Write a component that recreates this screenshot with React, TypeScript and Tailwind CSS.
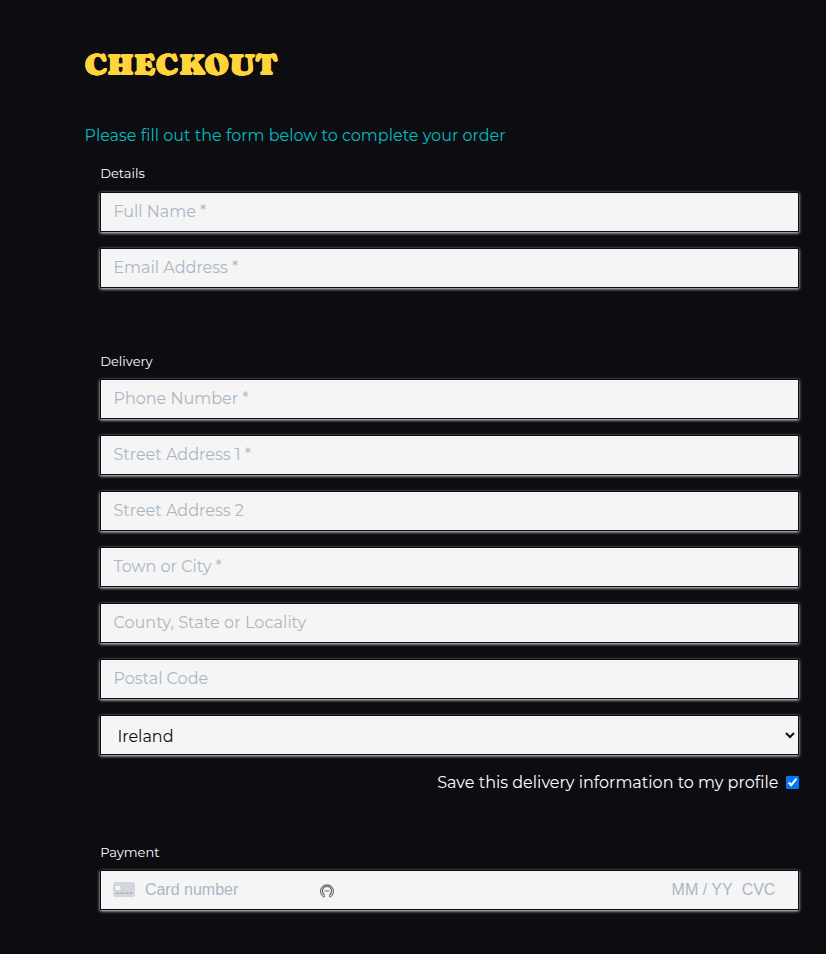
const field =
  "block h-10 w-full rounded-none border border-[#0d0c11] bg-[#f5f5f5] px-3 pb-0.5 text-base text-[#0d0c11] outline-none placeholder:text-[#aab7c4] placeholder:opacity-100 shadow-[0_1px_3px_0_#e6ebf1]";

function Field({ label, spacing = "" }: { label: string; spacing?: string }) {
  return <input type="text" placeholder={label} className={`${field} ${spacing}`} />;
}

function CardIcon() {
  return (
    <svg width="22" height="15" viewBox="0 0 22 15" className="mb-px block shrink-0">
      <rect width="22" height="15" rx="2" fill="#d3d6dd" />
      <rect x="2.5" y="4" width="5" height="4" rx="1" fill="#f5f5f5" />
      <path d="M2.5 11.3h3.7M7.3 11.3h3.5M11.8 11.3h3.5M16.2 11.3h3.3" stroke="#aeb2bf" strokeWidth="1.5" />
    </svg>
  );
}

function AutofillIcon() {
  return (
    <svg width="16" height="16" viewBox="0 0 16 16" fill="none" stroke="#666" className="mt-0.5 block shrink-0">
      <path d="M3.6 13.2A6.5 6.5 0 1 1 12.4 13.2" strokeWidth="1.1" />
      <path d="M5.2 11.6A4.6 4.6 0 1 1 10.8 11.6" strokeWidth="1.2" />
      <path d="M5.4 11.4v2.8M10.6 11.4v2.8M3.6 13.2l1.4 1M12.4 13.2l-1.4 1M5.5 8h5" strokeWidth="1" />
    </svg>
  );
}

export default function App() {
  return (
    <main className="h-[954px] w-full overflow-hidden bg-[#0d0c11] pl-[84.4px] pr-[26.6px] pt-[42px] font-[Montserrat,sans-serif] text-white">
      <h1 className="h-11 whitespace-nowrap pt-px font-['Cooper_Black','Caprasimo','Corben','Bevan','Alfa_Slab_One','DejaVu_Serif',serif] text-[30px] font-normal leading-[43px] text-[#ffd43a]">
        <span className="inline-block origin-left scale-x-[1.065] [text-shadow:0.5px_0_#ffd43a,1px_0_#ffd43a]">CHECKOUT</span>
      </h1>
      <p className="mt-[38px] h-6 whitespace-nowrap text-base leading-6 text-[#00bcc2]">
        Please fill out the form below to complete your order
      </p>
      <form className="ml-4">
        <section>
          <h2 className="-ml-[0.2px] mt-[15px] h-5 text-[13px] leading-5">Details</h2>
          <div className="mt-[9px] flex flex-col gap-4">
            <Field label="Full Name *" />
            <Field label="Email Address *" />
          </div>
        </section>
        <section>
          <h2 className="-ml-[0.2px] mt-[63px] h-5 text-[13px] leading-5">Delivery</h2>
          <div className="mt-2 flex flex-col gap-4">
            <Field label="Phone Number *" />
            <Field label="Street Address 1 *" />
            <Field label="Street Address 2" />
            <Field label="Town or City *" />
            <Field label="County, State or Locality" spacing="tracking-[0.07px]" />
            <Field label="Postal Code" />
            <select className="block h-10 w-full rounded-none border border-[#0d0c11] bg-[#f5f5f5] pl-3 pt-0.5 text-base text-[#0d0c11] shadow-[0_1px_3px_0_#e6ebf1]">
              <option>Ireland</option>
            </select>
          </div>
          <label className="mt-4 flex h-6 items-center justify-end gap-2 text-base leading-6">
            <span>Save this delivery information to my profile</span>
            <input type="checkbox" defaultChecked className="mb-0.5 h-[13px] w-[13px]" />
          </label>
        </section>
        <section>
          <h2 className="-ml-[0.2px] mt-[47px] h-5 text-[13px] leading-5">Payment</h2>
          <div className="mt-2 flex h-10 items-center border border-[#0d0c11] bg-[#f5f5f5] pl-3 pr-[23px] font-['Liberation_Sans',Arial,sans-serif] text-base text-[#aab7c4] shadow-[0_1px_3px_0_#e6ebf1]">
            <CardIcon />
            <span className="ml-[9.5px] w-[174.5px]">Card number</span>
            <AutofillIcon />
            <span className="ml-auto">MM / YY</span>
            <span className="ml-[9px]">CVC</span>
          </div>
        </section>
      </form>
    </main>
  );
}
